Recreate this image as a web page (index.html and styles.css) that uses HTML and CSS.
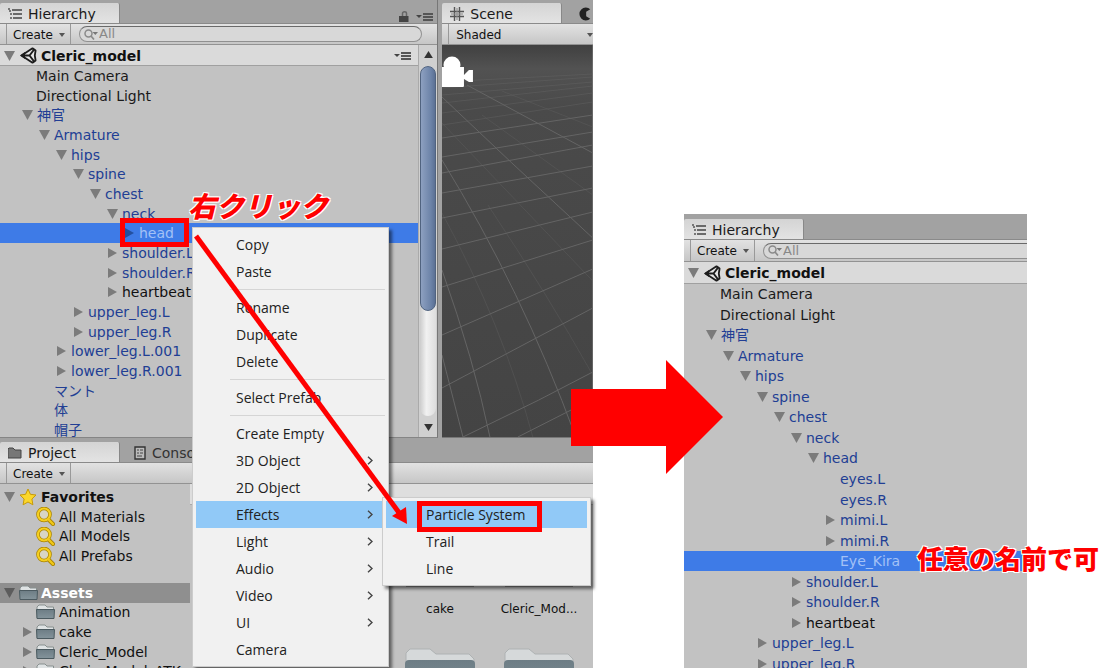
FILE: index.html
```html
<!DOCTYPE html>
<html lang="ja">
<head>
<meta charset="utf-8">
<title>Cleric_model</title>
<link rel="stylesheet" href="styles.css">
</head>
<body>
<svg class="defs" aria-hidden="true">
  <defs>
    <symbol id="open" viewBox="0 0 11 10"><path d="M0 0h11L5.500 10z" fill="#7b7b7b"/></symbol>
    <symbol id="shut" viewBox="0 0 11 10"><path d="M1 0v10l9-5z" fill="#7b7b7b"/></symbol>
    <symbol id="list" viewBox="0 0 14 12"><path d="M4 2h10M5 6h9M5 10h9" stroke="#444" stroke-width="1.300"/><path d="M0 1h2M1 3h2M2 6h2M2 10h2" stroke="#555" stroke-width="1.300"/></symbol>
    <symbol id="unity" viewBox="0 0 17 17"><path d="M1.500 8.500 12.500 1.300 15.600 3.500 14.800 8.500 15.600 13.500 12.500 15.700z" fill="#e6e6e6" stroke="#1c1c1c" stroke-width="1.800" stroke-linejoin="round"/><path d="M2 8.500h7.500M9.500 8.500 14.500 2M9.500 8.500 14.500 15" stroke="#1c1c1c" stroke-width="2"/><path d="M0 8.500 5 5v7z" fill="#1c1c1c"/></symbol>
    <symbol id="menu" viewBox="0 0 18 8"><path d="M0 2h6L3 5z" fill="#444"/><path d="M7 1h10M7 4h10M7 7h10" stroke="#555" stroke-width="2"/></symbol>
    <symbol id="folder" viewBox="0 0 19 16"><path d="M1 14V3l2-2h6l2 2h6.500v11z" fill="#dfe3e4" stroke="#88908f"/><path d="M.5 5.500h18L18 14.500H1z" fill="url(#slate)" stroke="#4b5a60"/></symbol>
    <symbol id="bigfolder" viewBox="0 0 70 60"><path d="M1 56V5l4-4h20l6 5h33l5 5v45z" fill="#d6d9da" stroke="#aeb2b3"/><path d="M0 16q0-4 4-4h62q4 0 4 4v38q0 4-4 4H4q-4 0-4-4z" fill="url(#slate)"/><path d="M1 57h68" stroke="#4a4a4a" stroke-width="3"/></symbol>
    <symbol id="find" viewBox="0 0 19 19"><path d="m11 11 6 6" stroke="#a98300" stroke-width="4" stroke-linecap="round"/><circle cx="8" cy="7.500" r="6" fill="#d8d5c4" stroke="#a98300" stroke-width="3.600"/><circle cx="8" cy="7.500" r="6" fill="none" stroke="#f5cf20" stroke-width="2.200"/><path d="m12 12 5 5" stroke="#f0c818" stroke-width="2.400" stroke-linecap="round"/></symbol>
    <symbol id="lens" viewBox="0 0 14 11"><circle cx="4.500" cy="4.500" r="3.500" fill="none" stroke="#8a8a8a" stroke-width="1.500"/><path d="m7 7 3 3.500" stroke="#8a8a8a" stroke-width="1.700"/><path d="M8.500 3H14l-2.700 3z" fill="#777"/></symbol>
    <symbol id="tick" viewBox="0 0 6 4"><path d="M0 0h6L3 4z" fill="#555"/></symbol>
    <symbol id="chev" viewBox="0 0 6 9"><path d="m1 .8 4 3.700-4 3.700" fill="none" stroke="#444" stroke-width="1.400"/></symbol>
    <linearGradient id="slate" x1="0" y1="0" x2="0" y2="1"><stop offset="0" stop-color="#6d7d85"/><stop offset="1" stop-color="#84949b"/></linearGradient>
  </defs>
</svg>

<main class="board">
  <section class="editor">
    <div class="upper">
      <section class="panel hierarchy">
        <header class="tabs"><button class="tab active"><svg class="i-list"><use href="#list"/></svg>Hierarchy</button>
          <span class="tools"><svg class="i-lock" viewBox="0 0 10 11"><path d="M3.500 5V2.500q0-1.700 2-1.700t2 1.700V5" fill="none" stroke="#666" stroke-width="1.500"/><path d="M0 5h9.500v6H0z" fill="#444"/></svg><svg class="i-menu"><use href="#menu"/></svg></span></header>
        <div class="bar"><button class="create">Create<svg class="i-tick"><use href="#tick"/></svg></button><label class="search"><svg class="i-lens"><use href="#lens"/></svg><input type="text" aria-label="Search hierarchy" value="All"></label></div>
        <div class="body">
          <div class="main">
            <div class="scene-name"><svg class="i-arrow"><use href="#open"/></svg><svg class="i-unity"><use href="#unity"/></svg><b>Cleric_model</b><svg class="i-menu"><use href="#menu"/></svg></div>
            <ul class="tree">
              <li class="plain">Main Camera</li>
              <li class="plain">Directional Light</li>
              <li class="l0"><svg class="i-arrow"><use href="#open"/></svg>神官</li>
              <li class="l1"><svg class="i-arrow"><use href="#open"/></svg>Armature</li>
              <li class="l2"><svg class="i-arrow"><use href="#open"/></svg>hips</li>
              <li class="l3"><svg class="i-arrow"><use href="#open"/></svg>spine</li>
              <li class="l4"><svg class="i-arrow"><use href="#open"/></svg>chest</li>
              <li class="l5"><svg class="i-arrow"><use href="#open"/></svg>neck</li>
              <li class="l6 selected"><svg class="i-arrow" viewBox="0 0 11 10"><path d="M1 0v10l9-5z" fill="#24509f"/></svg>head</li>
              <li class="l5"><svg class="i-arrow"><use href="#shut"/></svg>shoulder.L</li>
              <li class="l5"><svg class="i-arrow"><use href="#shut"/></svg>shoulder.R</li>
              <li class="l5 black"><svg class="i-arrow"><use href="#shut"/></svg>heartbeat</li>
              <li class="l3"><svg class="i-arrow"><use href="#shut"/></svg>upper_leg.L</li>
              <li class="l3"><svg class="i-arrow"><use href="#shut"/></svg>upper_leg.R</li>
              <li class="l2"><svg class="i-arrow"><use href="#shut"/></svg>lower_leg.L.001</li>
              <li class="l2"><svg class="i-arrow"><use href="#shut"/></svg>lower_leg.R.001</li>
              <li class="l2 leaf">マント</li>
              <li class="l2 leaf">体</li>
              <li class="l2 leaf">帽子</li>
            </ul>
          </div>
          <div class="scroll"><svg class="i-end" viewBox="0 0 10 8"><path d="M5 0 10 8H0z" fill="#333"/></svg><div class="track"><div class="thumb"></div></div><svg class="i-end" viewBox="0 0 10 8"><path d="M0 0h10L5 8z" fill="#333"/></svg></div>
        </div>
      </section>
      <section class="panel scene">
        <header class="tabs"><button class="tab active"><svg class="i-grid" viewBox="0 0 14 14"><path d="M4.500 0v14M9.500 0v14M0 4.500h14M0 9.500h14" stroke="#555" stroke-width="1.400"/><path d="M7 1v12M1 7h12" stroke="#888"/></svg>Scene</button><svg class="i-game" viewBox="0 0 10 12"><path d="M9.500 2A5.500 5.500 0 1 0 9.500 10L6 8V4z" fill="#222"/></svg></header>
        <div class="bar"><button class="shaded">Shaded<svg class="i-tick"><use href="#tick"/></svg></button></div>
        <svg class="view" viewBox="0 0 151 392" preserveAspectRatio="none">
          <defs><linearGradient id="sky" x1="0" y1="0" x2="0" y2="1"><stop offset="0" stop-color="#404040"/><stop offset=".06" stop-color="#525252"/><stop offset=".16" stop-color="#4a4a4a"/><stop offset="1" stop-color="#444"/></linearGradient></defs>
          <path d="M0 0h151v392H0z" fill="url(#sky)"/>
          <g fill="none" stroke="#646464">
            <path stroke-opacity=".45" d="M0 37l151-8M0 43l151-11M0 50l151-13M0 58l151-17M0 68l151-20M0 80l151-23"/>
            <path d="M0 93l151-23M0 112l151-25M0 128l151-28M0 148l151-27M0 173l151-30M0 204l151-37M0 242l151-47M0 290l151-66M0 343l151-80M21 392 97 355l54-28M76 392l75-38"/>
            <path d="M0 52 70 118 151 193M25 40l126 68M0 115q80 130 134 277M0 225q32 90 48 167M0 310l21 82"/>
            <path stroke-opacity=".35" d="M0 78l151 158M40 70l111 80M60 46l91 36M0 168q60 110 91 224M46 160q60 90 105 170"/>
          </g>
          <g fill="#fff"><circle cx="10" cy="20" r="8.500"/><path d="M0 22h22v8l5-5h4v12h-4l-5-3v7q0 1-1 1H0z"/></g>
        </svg>
      </section>
    </div>
    <section class="panel project">
      <header class="tabs"><button class="tab active"><svg class="i-list" viewBox="0 0 14 12"><path d="M0 11V2l1-1h4l2 2h6v8z" fill="#777" stroke="#444"/></svg>Project</button><button class="tab"><svg class="i-doc" viewBox="0 0 12 14"><path d="M1 1h10v12H1z" fill="#bbb" stroke="#333" stroke-width="1.400"/><path d="M3 4h2m1 0h3M3 7h2m1 0h3M3 10h5" stroke="#444"/></svg>Console</button></header>
      <div class="bar"><button class="create">Create<svg class="i-tick"><use href="#tick"/></svg></button></div>
      <div class="browser">
        <div class="side">
          <ul class="favs">
            <li class="root"><svg class="i-arrow"><use href="#open"/></svg><svg class="i-star" viewBox="0 0 18 18"><path d="m9 1 2.400 5.300 5.600.7-4.100 4 1 5.800L9 14l-4.900 2.800 1-5.800L1 7l5.600-.7z" fill="#fbd72b" stroke="#c69a0a"/></svg><b>Favorites</b></li>
            <li class="sub"><svg class="i-find"><use href="#find"/></svg>All Materials</li>
            <li class="sub"><svg class="i-find"><use href="#find"/></svg>All Models</li>
            <li class="sub"><svg class="i-find"><use href="#find"/></svg>All Prefabs</li>
          </ul>
          <ul class="assets">
            <li class="root head"><svg class="i-arrow" viewBox="0 0 11 10"><path d="M0 0h11L5.500 10z" fill="#5c5c5c"/></svg><svg class="i-folder"><use href="#folder"/></svg><b>Assets</b></li>
            <li class="sub"><svg class="i-folder"><use href="#folder"/></svg>Animation</li>
            <li class="sub nest"><svg class="i-arrow"><use href="#shut"/></svg><svg class="i-folder"><use href="#folder"/></svg>cake</li>
            <li class="sub nest"><svg class="i-arrow"><use href="#shut"/></svg><svg class="i-folder"><use href="#folder"/></svg>Cleric_Model</li>
            <li class="sub nest"><svg class="i-arrow"><use href="#shut"/></svg><svg class="i-folder"><use href="#folder"/></svg>Cleric_Model_ATK</li>
          </ul>
        </div>
        <div class="files">
          <div class="crumbs"></div>
          <div class="grid">
            <figure><svg class="i-big"><use href="#bigfolder"/></svg><figcaption>cake</figcaption></figure>
            <figure><svg class="i-big"><use href="#bigfolder"/></svg><figcaption>Cleric_Mod...</figcaption></figure>
            <figure><svg class="i-big"><use href="#bigfolder"/></svg></figure>
            <figure><svg class="i-big"><use href="#bigfolder"/></svg></figure>
          </div>
        </div>
      </div>
    </section>
  </section>

  <section class="panel result">
    <header class="tabs"><button class="tab active"><svg class="i-list"><use href="#list"/></svg>Hierarchy</button></header>
    <div class="bar"><button class="create">Create<svg class="i-tick"><use href="#tick"/></svg></button><label class="search"><svg class="i-lens"><use href="#lens"/></svg><input type="text" aria-label="Search result hierarchy" value="All"></label></div>
    <div class="scene-name"><svg class="i-arrow"><use href="#open"/></svg><svg class="i-unity"><use href="#unity"/></svg><b>Cleric_model</b></div>
    <ul class="tree">
      <li class="plain">Main Camera</li>
      <li class="plain">Directional Light</li>
      <li class="l0"><svg class="i-arrow"><use href="#open"/></svg>神官</li>
      <li class="l1"><svg class="i-arrow"><use href="#open"/></svg>Armature</li>
      <li class="l2"><svg class="i-arrow"><use href="#open"/></svg>hips</li>
      <li class="l3"><svg class="i-arrow"><use href="#open"/></svg>spine</li>
      <li class="l4"><svg class="i-arrow"><use href="#open"/></svg>chest</li>
      <li class="l5"><svg class="i-arrow"><use href="#open"/></svg>neck</li>
      <li class="l6"><svg class="i-arrow"><use href="#open"/></svg>head</li>
      <li class="l8 leaf">eyes.L</li>
      <li class="l8 leaf">eyes.R</li>
      <li class="l7"><svg class="i-arrow"><use href="#shut"/></svg>mimi.L</li>
      <li class="l7"><svg class="i-arrow"><use href="#shut"/></svg>mimi.R</li>
      <li class="l8 leaf selected">Eye_Kira</li>
      <li class="l5"><svg class="i-arrow"><use href="#shut"/></svg>shoulder.L</li>
      <li class="l5"><svg class="i-arrow"><use href="#shut"/></svg>shoulder.R</li>
      <li class="l5 black"><svg class="i-arrow"><use href="#shut"/></svg>heartbeat</li>
      <li class="l3"><svg class="i-arrow"><use href="#shut"/></svg>upper_leg.L</li>
      <li class="l3"><svg class="i-arrow"><use href="#shut"/></svg>upper_leg.R</li>
    </ul>
  </section>

  <nav class="menu context">
    <button>Copy</button><button>Paste</button><hr>
    <button>Rename</button><button>Duplicate</button><button>Delete</button><hr>
    <button>Select Prefab</button><hr>
    <button>Create Empty</button>
    <button>3D Object<svg><use href="#chev"/></svg></button>
    <button>2D Object<svg><use href="#chev"/></svg></button>
    <button class="on">Effects<svg><use href="#chev"/></svg></button>
    <button>Light<svg><use href="#chev"/></svg></button>
    <button>Audio<svg><use href="#chev"/></svg></button>
    <button>Video<svg><use href="#chev"/></svg></button>
    <button>UI<svg><use href="#chev"/></svg></button>
    <button>Camera</button>
  </nav>
  <nav class="menu effects"><button class="on">Particle System</button><button>Trail</button><button>Line</button></nav>

  <svg class="marks" viewBox="0 0 1117 668" aria-hidden="true">
    <path d="M196 236 400 514" stroke="#f00" stroke-width="5"/>
    <path d="M407 524 392 516 406 507z" fill="#f00"/>
    <path d="M571 389h95v-29l57 57-57 57v-28h-95z" fill="#f00"/>
    <path d="M122.500 220.500h64v24h-64z" fill="none" stroke="#f00" stroke-width="5"/>
    <path d="M419.500 503.500h120v26h-120z" fill="none" stroke="#f00" stroke-width="5"/>
  </svg>
  <p class="note click">右クリック</p>
  <p class="note name">任意の名前で可</p>
</main>
</body>
</html>
```
FILE: styles.css
```css
* { box-sizing: border-box; }
body { margin: 0; background: #fff; color: #111; font: 14px/20px "DejaVu Sans", "Noto Sans CJK JP", sans-serif; }
ul, p, figure { margin: 0; padding: 0; list-style: none; }
button { display: flex; align-items: center; margin: 0; padding: 0; border: 0; background: none; color: inherit; font: inherit; }
svg { flex: none; display: block; }
.defs { position: absolute; width: 0; height: 0; }

.board { position: relative; display: grid; grid-template-columns: 593fr 91fr 343fr 90fr; height: 100vh; overflow: hidden; }
.editor { grid-column: 1; display: flex; flex-direction: column; min-width: 0; min-height: 0; background: #a2a2a2; }
.upper { display: flex; flex: none; gap: 4px; height: 438px; }
.panel { display: flex; flex-direction: column; min-width: 0; overflow: hidden; background: #c2c2c2; }
.hierarchy { flex: 438; border-right: 1px solid #777; border-bottom: 1px solid #858585; }
.scene { flex: 151; border-bottom: 1px solid #777; }
.project { flex: 1; min-height: 0; }
.result { grid-column: 3; margin-top: 214px; }

.tabs { display: flex; flex: none; align-items: flex-end; height: 24px; background: #a2a2a2; border-bottom: 1px solid #8a8a8a; }
.tab { gap: 6px; height: 20px; width: 120px; padding: 2px 0 0 8px; color: #333; }
.tab.active { background: linear-gradient(#d4d4d4, #e3e3e3); color: #1a1a1a; border-right: 1px solid #888; border-radius: 2px 2px 0 0; }
.project .tabs { height: 25px; }
.project .tab + .tab { padding-left: 14px; }
.result .tabs { height: 26px; }
.tools { display: flex; align-items: center; gap: 7px; margin-left: auto; padding: 0 3px 0 0; }
.i-list { width: 14px; height: 12px; }
.i-lock { width: 10px; height: 13px; }
.i-menu { width: 18px; height: 8px; }
.i-grid, .i-game { width: 14px; height: 14px; }
.i-doc { width: 12px; height: 14px; }
.i-game { margin: 0 1px 2px auto; }
.i-tick { width: 6px; height: 4px; }

.bar { display: flex; flex: none; align-items: center; height: 21px; font-size: 12px; background: linear-gradient(#e2e2e2, #c6c6c6); border-bottom: 1px solid #929292; }
.create { gap: 6px; align-self: stretch; margin-left: 6px; width: 65px; padding: 1px 0 0 6px; border: solid #999; border-width: 0 1px; }
.shaded { flex: 1; align-self: stretch; justify-content: space-between; margin-left: 6px; padding: 1px 0 0 7px; border-left: 1px solid #999; }
.search { display: flex; flex: 1; align-items: center; gap: 1px; min-width: 0; height: 16px; margin: 0 15px 0 8px; padding-left: 4px; background: #d8d8d8; border: 1px solid #909090; border-top-color: #6a6a6a; border-radius: 8px; }
.search input { flex: 1; min-width: 0; height: 14px; padding: 0; border: 0; outline: 0; background: none; color: #888; font: 13px/14px "DejaVu Sans", sans-serif; }
.i-lens { width: 14px; height: 11px; }
.result .bar { height: 22px; }
.result .search { margin-right: -20px; }

.body { display: flex; flex: 1; min-height: 0; }
.main { flex: 1; min-width: 0; overflow: hidden; }
.scene-name { display: flex; flex: none; align-items: center; height: 21px; padding: 1px 6px 0 4px; background: #dadada; border-bottom: 1px solid #a0a0a0; }
.scene-name .i-arrow { margin-right: 5px; }
.scene-name .i-menu { margin-left: auto; }
.result .scene-name { height: 22px; }
.i-unity { width: 17px; height: 17px; margin-right: 4px; }
.i-arrow { width: 11px; height: 10px; }

.tree { display: grid; flex: none; grid-auto-rows: 1fr; height: 374px; color: #213e94; }
.result .tree { height: 390px; }
.tree li { display: flex; align-items: center; gap: 4px; min-height: 0; line-height: 16px; white-space: nowrap; }
.tree .plain { padding-left: 36px; color: #1a1a1a; }
.tree .black { color: #111; }
.l0 { padding-left: 22px; }
.l1 { padding-left: 39px; }
.l2 { padding-left: 56px; }
.l3 { padding-left: 73px; }
.l4 { padding-left: 90px; }
.l5 { padding-left: 107px; }
.l6 { padding-left: 124px; }
.l7 { padding-left: 141px; }
.l2.leaf { padding-left: 54px; }
.l8 { padding-left: 156px; }
.tree .selected { background: #3e7be7; color: #a3c1f6; }

.scroll { display: flex; flex-direction: column; align-items: center; width: 19px; padding: 6px 0; background: #d0d0d0; border-left: 1px solid #aaa; }
.i-end { width: 9px; height: 7px; }
.track { flex: 1; width: 16px; margin: 8px 0; background: linear-gradient(90deg, #ccc, #f1f1f1 40%, #ddd); border-radius: 8px; }
.thumb { height: 70%; border: 1px solid #50637f; border-radius: 8px; background: linear-gradient(90deg, #8da0c0, #6c83a8 70%, #5b7094); }
.view { flex: 1; width: 100%; min-height: 0; }

.browser { display: flex; flex: 1; min-height: 0; }
.side { width: 190px; padding-top: 3px; }
.favs, .assets { display: grid; grid-auto-rows: 1fr; height: 79px; margin-bottom: 17px; }
.assets { height: 98px; }
.side li { display: flex; align-items: center; min-height: 0; white-space: nowrap; line-height: 16px; }
.side .root { padding-left: 4px; }
.side .sub { padding-left: 36px; }
.side .nest { padding-left: 22px; }
.side .nest .i-arrow { margin-right: 3px; }
.side .root .i-arrow { margin-right: 4px; }
.head { background: #8f8f8f; color: #fff; }
.i-star { width: 18px; height: 18px; margin-right: 4px; }
.i-find { width: 19px; height: 19px; margin-right: 4px; }
.i-folder { width: 19px; height: 16px; margin-right: 4px; }
.head .i-folder { margin-right: 3px; }
.files { flex: 1; min-width: 0; }
.crumbs { height: 21px; background: #dedede; border-bottom: 1px solid #aaa; }
.grid { display: grid; grid-template-columns: 70px 70px; grid-auto-rows: 100px; justify-content: end; gap: 20px 29px; padding: 23px 19px 0 0; }
.grid figure { display: flex; flex-direction: column; align-items: center; }
.i-big { width: 70px; height: 60px; }
.grid figcaption { margin-top: 11px; font-size: 12px; }

.menu { position: absolute; padding: 3px; background: #f1f1f1; border: 1px solid #ccc; box-shadow: 3px 3px 3px rgba(0, 0, 0, .5); font: 14px/27px "Open Sans", sans-serif; color: #222; }
.menu button { width: 100%; height: 27px; padding: 0 12px 0 40px; justify-content: space-between; }
.menu .on { background: #91c9f7; }
.menu hr { height: 1px; margin: 4px 0 4px 34px; border: 0; background: #d5d5d5; }
.menu svg { width: 6px; height: 9px; }
.context { left: 192px; top: 227px; width: 197px; }
.effects { left: 382px; top: 497px; width: 209px; }
.marks { position: absolute; left: 0; top: 0; width: 1117px; height: 668px; pointer-events: none; }
.note { position: absolute; color: #f00; font-family: "Noto Sans CJK JP", sans-serif; font-weight: 900; white-space: nowrap; text-shadow: 1px 1px #fff, -1px -1px #fff, 1px -1px #fff, -1px 1px #fff; }
.click { left: 188px; top: 187px; font-size: 28px; line-height: 36px; font-style: italic; }
.name { left: 917px; top: 541px; font-size: 26px; line-height: 34px; }
```
